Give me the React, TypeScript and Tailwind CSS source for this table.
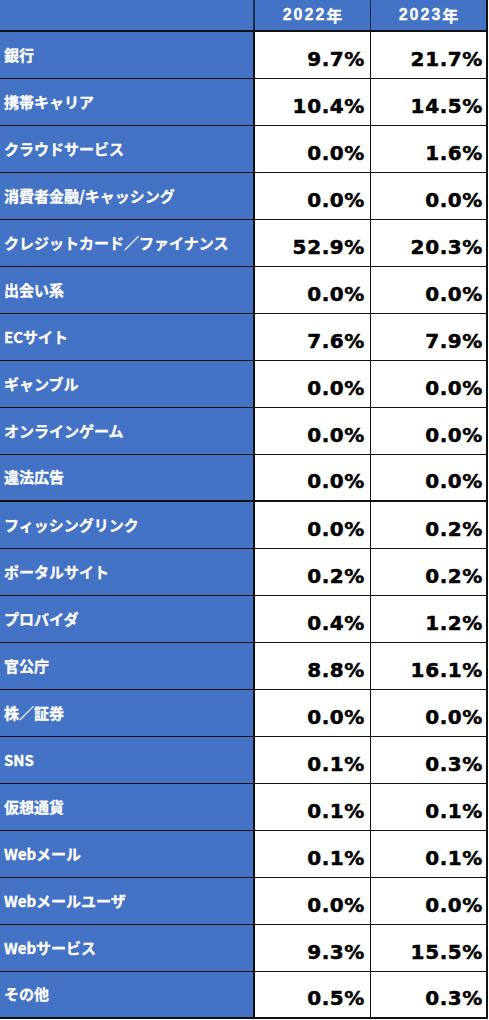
import React from "react";

const rows: [string, string, string][] = [
  ["銀行", "9.7%", "21.7%"],
  ["携帯キャリア", "10.4%", "14.5%"],
  ["クラウドサービス", "0.0%", "1.6%"],
  ["消費者金融/キャッシング", "0.0%", "0.0%"],
  ["クレジットカード／ファイナンス", "52.9%", "20.3%"],
  ["出会い系", "0.0%", "0.0%"],
  ["ECサイト", "7.6%", "7.9%"],
  ["ギャンブル", "0.0%", "0.0%"],
  ["オンラインゲーム", "0.0%", "0.0%"],
  ["違法広告", "0.0%", "0.0%"],
  ["フィッシングリンク", "0.0%", "0.2%"],
  ["ポータルサイト", "0.2%", "0.2%"],
  ["プロバイダ", "0.4%", "1.2%"],
  ["官公庁", "8.8%", "16.1%"],
  ["株／証券", "0.0%", "0.0%"],
  ["SNS", "0.1%", "0.3%"],
  ["仮想通貨", "0.1%", "0.1%"],
  ["Webメール", "0.1%", "0.1%"],
  ["Webメールユーザ", "0.0%", "0.0%"],
  ["Webサービス", "9.3%", "15.5%"],
  ["その他", "0.5%", "0.3%"],
];

export default function App() {
  return (
    <div className="w-[489px] h-[1020px] bg-white overflow-hidden">
      <div className="w-[488px] flex flex-col">
        <div className="flex h-[32px] border-b-2 border-[#111]">
          <div className="w-[255px] bg-[#4472c4] border-r-2 border-[#1a2a4a]" />
          <div className="w-[116px] bg-[#4472c4] border-r border-[#1a2a4a] flex items-center justify-center text-white font-bold text-[16px] tracking-[2px] font-['Liberation_Sans','Noto_Sans_CJK_JP',sans-serif] [-webkit-text-stroke:0.3px_white]">
            2022<span className="tracking-normal font-['Noto_Sans_CJK_JP',sans-serif]">年</span>
          </div>
          <div className="w-[117px] bg-[#4472c4] border-r-2 border-[#111] flex items-center justify-center text-white font-bold text-[16px] tracking-[2px] font-['Liberation_Sans','Noto_Sans_CJK_JP',sans-serif] [-webkit-text-stroke:0.3px_white]">
            2023<span className="tracking-normal font-['Noto_Sans_CJK_JP',sans-serif]">年</span>
          </div>
        </div>
        {rows.map(([label, a, b], i) => (
          <div
            key={i}
            className={
              i === 9 || i === rows.length - 1
                ? "flex h-[47px] border-b-2 border-[#111]"
                : "flex h-[47px] border-b border-[#111]"
            }
          >
            <div className="w-[255px] bg-[#4472c4] border-r-2 border-[#111] flex items-center pl-[4px] text-white font-bold text-[15px] whitespace-nowrap font-['Noto_Sans_CJK_JP','Noto_Sans',sans-serif] [-webkit-text-stroke:0.3px_white]">
              {label}
            </div>
            <div className="w-[116px] bg-white border-r border-[#111] flex items-end justify-end pr-[5px] pb-[4px] text-black font-bold text-[20px] tracking-[0.6px] font-['DejaVu_Sans',sans-serif] [-webkit-text-stroke:0.5px_black]">
              {a}
            </div>
            <div className="w-[117px] bg-white border-r-2 border-[#111] flex items-end justify-end pr-[3px] pb-[4px] text-black font-bold text-[20px] tracking-[0.6px] font-['DejaVu_Sans',sans-serif] [-webkit-text-stroke:0.5px_black]">
              {b}
            </div>
          </div>
        ))}
      </div>
    </div>
  );
}
